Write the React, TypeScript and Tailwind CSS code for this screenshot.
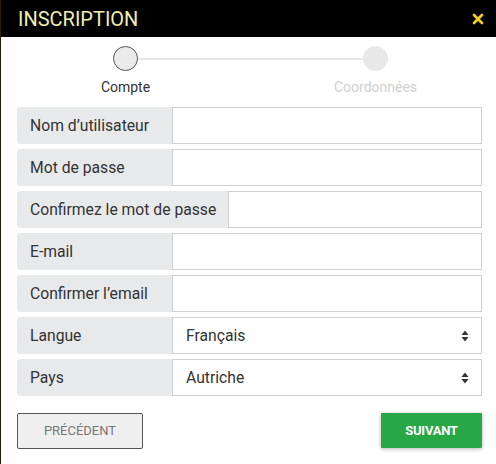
import { X } from "lucide-react";

type Field = {
  label: string;
  kind?: "input" | "select";
  value?: string;
};

const fields: Field[] = [
  { label: "Nom d’utilisateur" },
  { label: "Mot de passe" },
  { label: "Confirmez le mot de passe" },
  { label: "E-mail" },
  { label: "Confirmer l’email" },
  { label: "Langue", kind: "select", value: "Français" },
  { label: "Pays", kind: "select", value: "Autriche" },
];

function SortIcon() {
  return (
    <svg width="8" height="12" viewBox="0 0 8 12" className="text-[#333]">
      <path d="M4 0.5 L7.5 5 H0.5 Z" fill="currentColor" />
      <path d="M4 11.5 L7.5 7 H0.5 Z" fill="currentColor" />
    </svg>
  );
}

function FieldRow({ field }: { field: Field }) {
  return (
    <div className="flex h-[37px]">
      <div className="flex min-w-[155px] items-center whitespace-nowrap rounded-l-[3px] bg-[#e8e9eb] pl-[13px] pr-3 text-[15.7px] text-[#333]">
        {field.label}
      </div>
      {field.kind === "select" ? (
        <div className="flex flex-1 items-center justify-between border border-[#cfcfcf] bg-white pl-[13px] pr-[12px] text-[15.7px] text-[#333]">
          <span>{field.value}</span>
          <SortIcon />
        </div>
      ) : (
        <div className="flex-1 border border-[#cfcfcf] bg-white" />
      )}
    </div>
  );
}

export default function App() {
  return (
    <div
      className="flex h-[464px] w-[496px] bg-[#2a1a0c]"
      style={{ fontFamily: "Roboto, 'Liberation Sans', sans-serif" }}
    >
      <div className="ml-px flex flex-1 flex-col bg-white">
        <div className="flex h-[37px] items-center justify-between bg-black pl-[17px] pr-[14px]">
          <h1 className="text-[20px] font-normal text-[#eeeeb0]">INSCRIPTION</h1>
          <X className="h-4 w-4 text-[#f2cf1c]" strokeWidth={4} />
        </div>

        <div className="relative mt-[9px] flex h-[52px]">
          <div className="absolute left-[124px] right-[121px] top-[12px] h-[2px] bg-[#e6e6e6]" />
          <div className="relative flex w-[249px] flex-col items-center">
            <div className="h-[25px] w-[25px] rounded-full border border-[#555] bg-[#ebebeb]" />
            <span className="mt-[6px] text-[14px] text-[#333]">Compte</span>
          </div>
          <div className="relative ml-px flex w-[249px] flex-col items-center">
            <div className="h-[25px] w-[25px] rounded-full bg-[#e8e8e8]" />
            <span className="mt-[6px] text-[14px] text-[#cfcfcf]">Coordonnées</span>
          </div>
        </div>

        <div className="mt-[9px] flex flex-col gap-[5px] pl-4 pr-[18px]">
          {fields.map((f) => (
            <FieldRow key={f.label} field={f} />
          ))}
        </div>

        <div className="mt-[17px] flex justify-between pl-4 pr-[18px]">
          <button className="h-[36px] w-[126px] rounded-[2px] border border-[#555] bg-[#efefef] text-[13px] text-[#777]">
            PRÉCÉDENT
          </button>
          <button className="h-[35px] w-[101px] rounded-[1px] bg-[#28a745] text-[13px] font-bold tracking-[-0.02em] text-white shadow-[0_1px_4px_rgba(0,0,0,0.3)]">
            SUIVANT
          </button>
        </div>
      </div>
    </div>
  );
}
